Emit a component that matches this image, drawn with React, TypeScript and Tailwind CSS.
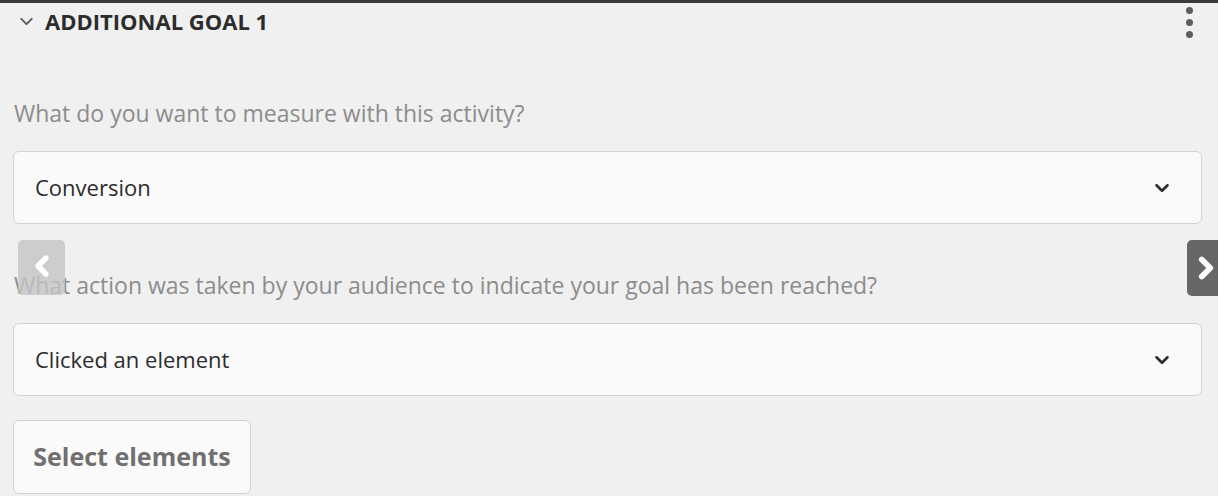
import { ChevronDown, ChevronLeft, ChevronRight } from "lucide-react";

const font = { fontFamily: '"Open Sans", "Liberation Sans", sans-serif' };

function SelectBox({ value }: { value: string }) {
  return (
    <div className="h-[73px] w-[1189px] rounded-[6px] border border-[#d3d3d3] bg-[#fafafa] flex items-center justify-between pl-[21px] pr-[28px]">
      <span className="text-[22px] text-[#2c2c2c]">{value}</span>
      <ChevronDown size={22} strokeWidth={2.8} className="text-[#2c2c2c]" />
    </div>
  );
}

export default function App() {
  return (
    <div className="w-[1218px] h-[496px] bg-[#f0f0f0] relative overflow-hidden" style={font}>
      <div className="h-[3px] bg-[#3a3a3a]" />

      {/* header */}
      <div className="h-[37px] flex items-center justify-between pl-[16px] pr-[25px]">
        <div className="flex items-center gap-[8px]">
          <ChevronDown size={21} strokeWidth={2.2} className="text-[#5a5a5a]" />
          <span className="text-[22px] font-bold text-[#2c2c2c]">ADDITIONAL GOAL 1</span>
        </div>
        <div className="flex flex-col gap-[5px] pt-[1px]">
          <span className="w-[7px] h-[7px] rounded-full bg-[#5e5e5e]" />
          <span className="w-[7px] h-[7px] rounded-full bg-[#5e5e5e]" />
          <span className="w-[7px] h-[7px] rounded-full bg-[#5e5e5e]" />
        </div>
      </div>

      <div className="px-[13px] pt-[60px] flex flex-col">
        <div className="h-[26px] leading-[26px] text-[23px] text-[#8c8c8c] pl-[1px] mb-[25px] whitespace-nowrap">
          What do you want to measure with this activity?
        </div>
        <SelectBox value="Conversion" />

        <div className="h-[26px] leading-[26px] text-[23px] text-[#8c8c8c] pl-[1px] mt-[48px] mb-[25px] whitespace-nowrap">
          What action was taken by your audience to indicate your goal has been reached?
        </div>
        <SelectBox value="Clicked an element" />

        <button className="mt-[24px] h-[74px] w-[238px] rounded-[6px] border border-[#d3d3d3] bg-[#fafafa] text-[25px] font-bold text-[#707070]">
          Select elements
        </button>
      </div>

      {/* carousel arrows */}
      <div className="absolute left-[18px] top-[240px] w-[47px] h-[55px] rounded-[5px] bg-[#c4c4c4]/80 flex items-center justify-center">
        <ChevronLeft size={32} strokeWidth={4} className="text-white -mt-[3px]" />
      </div>
      <div className="absolute left-[1187px] top-[240px] w-[40px] h-[56px] rounded-[5px] bg-[#676767] flex items-center pl-[2px]">
        <ChevronRight size={34} strokeWidth={4} className="text-white" />
      </div>
    </div>
  );
}
